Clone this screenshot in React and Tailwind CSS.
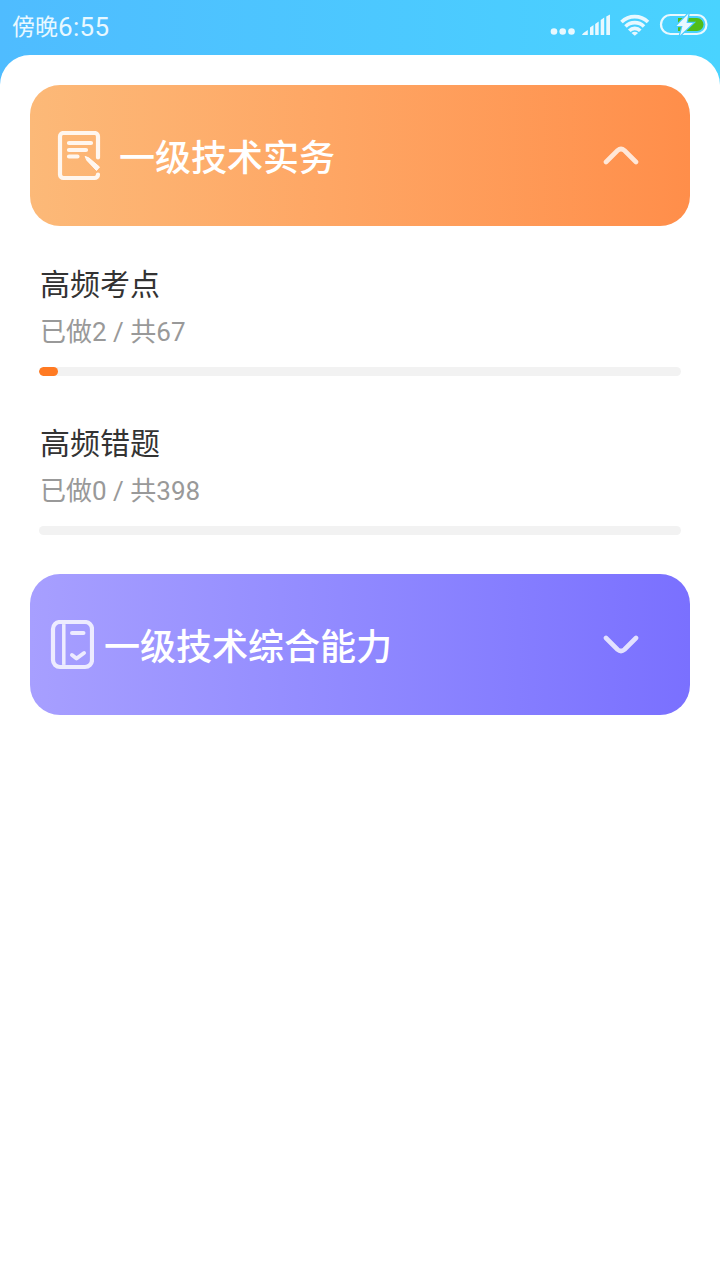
import React, { useState } from "react";

const sections = [
  {
    id: 1,
    title: "一级技术实务",
    icon: "note",
    items: [
      { id: 11, name: "高频考点", done: 2, total: 67 },
      { id: 12, name: "高频错题", done: 0, total: 398 },
    ],
  },
  {
    id: 2,
    title: "一级技术综合能力",
    icon: "book",
    items: [],
  },
];

const NoteIcon = () => (
  <svg className="w-11 h-[50px]" viewBox="0 0 44 50" fill="none" stroke="white" strokeOpacity="0.88" strokeLinecap="round" strokeLinejoin="round">
    <path d="M41 26.500V5.500a3.500 3.500 0 0 0-3.500-3.500H6.500A3.500 3.500 0 0 0 3 5.500v38a3.500 3.500 0 0 0 3.500 3.500h31A3.500 3.500 0 0 0 41 43.500" strokeWidth="4.200" />
    <path d="M12 12h22M12 19h17M12 25.500h8.500" strokeWidth="4.200" />
    <path d="M28.500 25.500l3.500 1.500 10.500 9-3 3.500-9.500-10z" fill="white" fillOpacity="0.88" strokeWidth="1" />
  </svg>
);

const BookIcon = () => (
  <svg className="w-11 h-[50px]" viewBox="0 0 44 50" fill="none" stroke="white" strokeOpacity="0.8" strokeLinecap="round" strokeLinejoin="round">
    <rect x="3" y="2" width="39" height="45" rx="7" strokeWidth="4.200" />
    <path d="M13.800 4.100v40.800" strokeWidth="3.500" strokeLinecap="butt" />
    <path d="M22 13h11.500M22 35l4.500 3.500 7.500-5.500" strokeWidth="4" />
  </svg>
);

const Chevron = ({ open }) => (
  <svg className={`w-9 h-5 ${open ? "-mt-0.5" : "rotate-180"}`} viewBox="0 0 36 20" fill="none" stroke="white" strokeOpacity="0.78" strokeWidth="4.600" strokeLinecap="round">
    <path d="M3 17L14.500 5.500q3.500-3 7 0L33 17" />
  </svg>
);

const StatusBar = () => (
  <div className="h-[55px] px-3 flex justify-between items-start text-[#e8f8ff]">
    <p className="mt-[9px] flex items-center h-9 text-[23px] leading-9">
      <span className="mt-0.5">傍晚</span>
      <span className="text-[26px] tracking-[0.3px]">6:55</span>
    </p>
    <svg className="w-[160px] h-12 -mr-0.5" viewBox="0 0 160 48" fill="currentColor">
      <circle cx="4" cy="31.500" r="3.300" />
      <circle cx="12.700" cy="31.500" r="3.300" />
      <circle cx="21.500" cy="31.500" r="3.300" />
      <path d="M32 35q0-1.500 5.800-5V35zM40 35v-7.500l3.500-2.500v10zM45.200 35V24l3.500-2.500V35zM50.700 35V20l3.500-2.500V35zM56.300 35V16.500l3.700-2V35z" />
      <g fill="none" stroke="currentColor" strokeWidth="3.600">
        <path d="M71.500 22a19 19 0 0 1 26.500 0" />
        <path d="M75.500 26.500a13 13 0 0 1 18.500 0" />
        <path d="M79.300 30.800a7.500 7.500 0 0 1 11 0" />
      </g>
      <path d="M81.500 33q3.300-2.500 6.600 0L84.800 35.800z" />
      <rect x="111" y="15" width="45.500" height="19" rx="9.500" fill="none" stroke="currentColor" strokeWidth="2.200" />
      <path d="M128 18h19a6.500 6.500 0 0 1 0 13h-19z" fill="#51bd18" />
      <path d="M138.500 13.500L126.500 26h6l-2.500 9.500L143 23h-6.500z" stroke="#49cdff" strokeWidth="2.500" paintOrder="stroke" />
    </svg>
  </div>
);

const ProgressItem = ({ item }) => (
  <div className="pt-[37px] pb-[9px]">
    <p className="h-11 leading-11 text-[30px] text-[#333] pl-px">{item.name}</p>
    <p className="mt-[5px] h-10 leading-10 text-[26px] text-[#999] pl-px">
      已做{item.done} / 共{item.total}
    </p>
    <div className="mt-[15px] h-[9px] rounded-full bg-[#f2f2f2] overflow-hidden">
      <div
        className="h-full rounded-full bg-[#ff7a22]"
        style={{ width: `${(item.done / item.total) * 100}%` }}
      ></div>
    </div>
  </div>
);

const App = () => {
  const [openId, setOpenId] = useState(1);

  const handleToggle = (id) => {
    setOpenId(openId === id ? null : id);
  };

  return (
    <div className="min-h-screen bg-linear-to-r from-[#4fbcff] to-[#49d3ff] font-[Roboto,'Noto_Sans_CJK_SC',sans-serif]">
      <StatusBar />
      <main className="min-h-[1225px] rounded-t-[30px] bg-white px-[30px] pt-[30px] flex flex-col gap-[30px]">
        {sections.map((section) => (
          <section key={section.id}>
            <button
              onClick={() => handleToggle(section.id)}
              className={`w-full h-[141px] rounded-[30px] flex items-center pr-[51px] text-white cursor-pointer bg-linear-to-r ${
                section.icon === "note"
                  ? "from-[#fcb978] to-[#ff8e4a] pl-[27px]"
                  : "from-[#a79fff] to-[#7a70ff] pl-5"
              }`}
            >
              {section.icon === "note" ? <NoteIcon /> : <BookIcon />}
              <span
                className={`pt-1.5 text-4xl font-medium ${
                  section.icon === "note" ? "ml-[18px]" : "ml-2.5"
                }`}
              >
                {section.title}
              </span>
              <span className="ml-auto">
                <Chevron open={openId === section.id} />
              </span>
            </button>
            {openId === section.id && (
              <div className="px-[9px]">
                {section.items.map((item) => (
                  <ProgressItem key={item.id} item={item} />
                ))}
              </div>
            )}
          </section>
        ))}
      </main>
    </div>
  );
};

export default App;
